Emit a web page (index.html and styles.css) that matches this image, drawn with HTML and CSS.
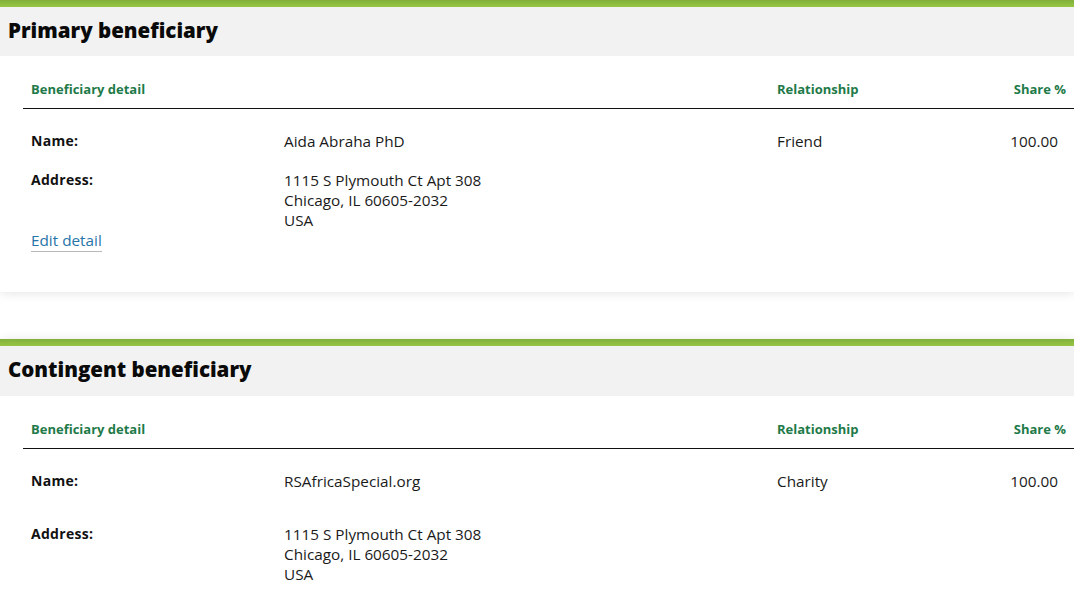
FILE: index.html
```html
<!DOCTYPE html>
<html>
<head>
<meta charset="utf-8">
<link rel="stylesheet" href="styles.css">
</head>
<body>
<section class="card card-first">
  <div class="card-bar"></div>
  <h2 class="card-title">Primary beneficiary</h2>
  <div class="table">
    <div class="th">Beneficiary detail</div>
    <div class="th"></div>
    <div class="th">Relationship</div>
    <div class="th th-right">Share %</div>

    <div class="td label row-name">Name:</div>
    <div class="td row-name">Aida Abraha PhD</div>
    <div class="td row-name">Friend</div>
    <div class="td td-right row-name">100.00</div>

    <div class="td label row-addr">Address:</div>
    <div class="td row-addr">1115 S Plymouth Ct Apt 308<br>Chicago, IL 60605-2032<br>USA</div>
    <div class="td row-addr"></div>
    <div class="td row-addr"></div>

    <div class="td row-link"><a class="link" href="#">Edit detail</a></div>
  </div>
</section>

<section class="card card-second">
  <div class="card-bar"></div>
  <h2 class="card-title">Contingent beneficiary</h2>
  <div class="table">
    <div class="th">Beneficiary detail</div>
    <div class="th"></div>
    <div class="th">Relationship</div>
    <div class="th th-right">Share %</div>

    <div class="td label row-name">Name:</div>
    <div class="td row-name">RSAfricaSpecial.org</div>
    <div class="td row-name">Charity</div>
    <div class="td td-right row-name">100.00</div>

    <div class="td label row-addr2">Address:</div>
    <div class="td row-addr2">1115 S Plymouth Ct Apt 308<br>Chicago, IL 60605-2032<br>USA</div>
    <div class="td row-addr2"></div>
    <div class="td row-addr2"></div>
  </div>
</section>
</body>
</html>
```

FILE: styles.css
```css
html, body {
  margin: 0;
  padding: 0;
  background: #ffffff;
}
body {
  font-family: "Open Sans", "Lato", sans-serif;
  color: #1a1a1a;
  font-size: 15.3px;
}
.card {
  background: #fff;
  box-shadow: 0 1px 10px rgba(0, 0, 0, 0.11);
}
.card-first {
  padding-bottom: 42px;
  margin-bottom: 47px;
}
.card-second {
  padding-bottom: 20px;
}
.card-bar {
  height: 7px;
  background: linear-gradient(#80b03a, #97c644);
}
.card-title {
  margin: 0;
  height: 49px;
  box-sizing: border-box;
  padding: 9px 0 0 8px;
  background: #f2f2f2;
  font-size: 20.5px;
  font-weight: 800;
  line-height: 28px;
  color: #0a0a0a;
}
.card-second .card-title {
  height: 50px;
}
.table {
  display: grid;
  grid-template-columns: 253px 1fr 205px 100px;
  margin-left: 23px;
  line-height: 20px;
}
.th {
  padding: 23px 8px 9px 8px;
  border-bottom: 1px solid #111;
  color: #1e7a48;
  font-weight: 700;
  font-size: 13px;
}
.th-right {
  text-align: right;
}
.td {
  padding-left: 8px;
  padding-right: 8px;
}
.td-right {
  text-align: right;
  padding-right: 16px;
}
.label {
  font-weight: 700;
  font-size: 14px;
  letter-spacing: 0.3px;
  color: #111;
}
.row-name {
  padding-top: 22px;
}
.row-addr {
  padding-top: 19px;
}
.row-addr2 {
  padding-top: 33px;
}
.link {
  color: #2874a8;
  text-decoration: none;
  border-bottom: 1px solid #b8b8b8;
  padding-bottom: 1px;
}
```
